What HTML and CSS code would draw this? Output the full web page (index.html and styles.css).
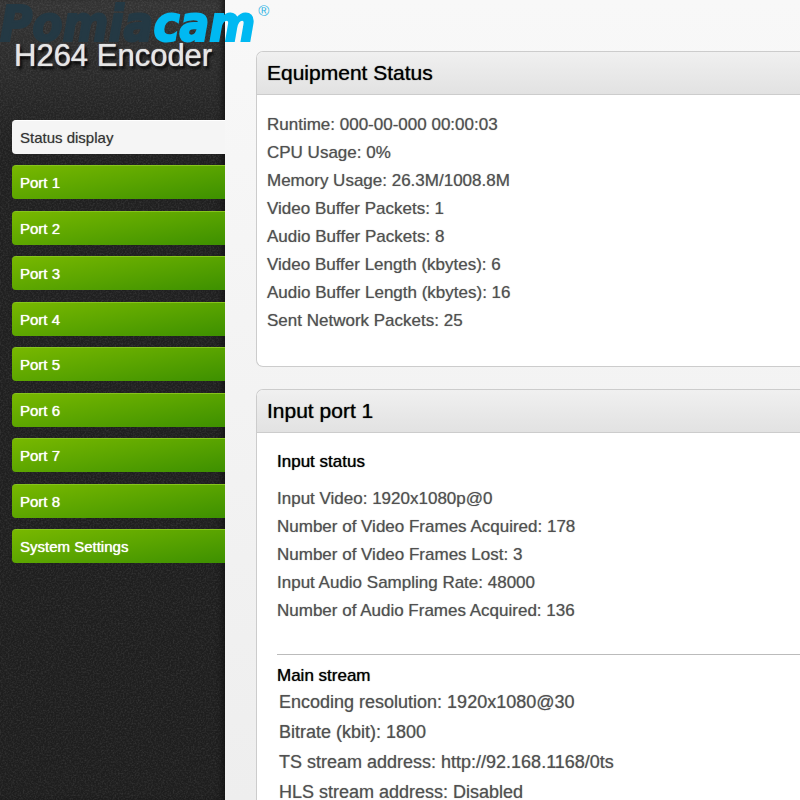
FILE: index.html
```
<!DOCTYPE html>
<html lang="en">
<head>
    <meta charset="utf-8">
    <title>H264 Encoder</title>
    <link rel="stylesheet" href="styles.css">
</head>
<body>
    <div class="brand"><span class="brand-dark">Pomia</span><span class="brand-light">cam</span><sup class="brand-mark">®</sup></div>

    <aside class="sidebar">
        <h1 class="product">H264 Encoder</h1>
        <nav class="menu">
            <a class="menu-item active" href="#status">Status display</a>
            <a class="menu-item" href="#port1">Port 1</a>
            <a class="menu-item" href="#port2">Port 2</a>
            <a class="menu-item" href="#port3">Port 3</a>
            <a class="menu-item" href="#port4">Port 4</a>
            <a class="menu-item" href="#port5">Port 5</a>
            <a class="menu-item" href="#port6">Port 6</a>
            <a class="menu-item" href="#port7">Port 7</a>
            <a class="menu-item" href="#port8">Port 8</a>
            <a class="menu-item" href="#system">System Settings</a>
        </nav>
    </aside>

    <main class="content">
        <section class="panel" id="status">
            <h2 class="panel-title">Equipment Status</h2>
            <div class="panel-body">
                <p>Runtime: 000-00-000 00:00:03</p>
                <p>CPU Usage: 0%</p>
                <p>Memory Usage: 26.3M/1008.8M</p>
                <p>Video Buffer Packets: 1</p>
                <p>Audio Buffer Packets: 8</p>
                <p>Video Buffer Length (kbytes): 6</p>
                <p>Audio Buffer Length (kbytes): 16</p>
                <p>Sent Network Packets: 25</p>
            </div>
        </section>

        <section class="panel" id="port1">
            <h2 class="panel-title">Input port 1</h2>
            <div class="panel-group">
                <h3>Input status</h3>
                <p>Input Video: 1920x1080p@0</p>
                <p>Number of Video Frames Acquired: 178</p>
                <p>Number of Video Frames Lost: 3</p>
                <p>Input Audio Sampling Rate: 48000</p>
                <p>Number of Audio Frames Acquired: 136</p>
            </div>
            <div class="panel-group stream">
                <h3>Main stream</h3>
                <p>Encoding resolution: 1920x1080@30</p>
                <p>Bitrate (kbit): 1800</p>
                <p>TS stream address: http://92.168.1168/0ts</p>
                <p>HLS stream address: Disabled</p>
            </div>
        </section>
    </main>
</body>
</html>
```

FILE: styles.css
```
* {
    box-sizing: border-box;
}

body {
    display: flex;
    min-height: 100vh;
    margin: 0;
    overflow-x: hidden;
    font-family: "Liberation Sans", Arial, sans-serif;
    font-size: 17px;
    color: #505050;
    background: #f4f4f4;
}

h1, h2, h3, p {
    margin: 0;
}

/* logo lies over both the sidebar and the content */
.brand {
    position: absolute;
    top: 0;
    left: 0;
    display: flex;
    font-family: "DejaVu Sans Condensed", "DejaVu Sans", sans-serif;
    font-size: 49px;
    font-weight: bold;
    font-style: italic;
    line-height: 49px;
    -webkit-text-stroke: 2px;
}

.brand-dark {
    color: #243944;
}

.brand-light {
    color: #00b9f2;
}

.brand-mark {
    margin: 3px 0 0 3px;
    font-family: "Liberation Sans", sans-serif;
    font-size: 15px;
    font-weight: normal;
    font-style: normal;
    line-height: 16px;
    color: #2fb4e4;
    -webkit-text-stroke: 0;
}

.sidebar {
    flex: 0 0 225px;
    padding: 39px 0 0 12px;
    background-color: #222;
    background-image:
        url("data:image/svg+xml,%3Csvg xmlns='http://www.w3.org/2000/svg' width='150' height='150'%3E%3Cfilter id='n'%3E%3CfeTurbulence type='fractalNoise' baseFrequency='.6' numOctaves='2' stitchTiles='stitch'/%3E%3CfeColorMatrix values='0 0 0 0 1 0 0 0 0 1 0 0 0 0 1 .2 0 0 0 -.08'/%3E%3C/filter%3E%3Crect width='150' height='150' filter='url(%23n)'/%3E%3C/svg%3E"),
        linear-gradient(#343434, #202020 150px, #1e1e1e);
    box-shadow: inset -6px 0 6px -4px #111;
}

.product {
    padding-left: 2px;
    font-size: 31px;
    font-weight: normal;
    line-height: 34px;
    color: #e6e6e6;
    white-space: nowrap;
    text-shadow: 0 0 1px #e6e6e6, 2px 3px 3px #000;
}

.menu {
    display: flex;
    flex-direction: column;
    justify-content: space-between;
    height: 443px;
    margin-top: 47px;
}

.menu-item {
    height: 34px;
    padding-left: 8px;
    border-top: 1px solid #86c41c;
    border-radius: 4px 0 0 4px;
    background: linear-gradient(170deg, #78b800, #5ba500 50%, #3d9000);
    font-size: 15px;
    line-height: 33px;
    color: #fff;
    text-decoration: none;
    text-shadow: 0 0 1px #fff;
}

.menu-item.active {
    border-top-color: #fff;
    background: #f5f5f5;
    color: #333;
    text-shadow: 0 0 1px #999;
}

.content {
    flex: 1;
    min-width: 0;
    height: 100vh;
    overflow: hidden;
    padding: 51px 0 0 31px;
    background: linear-gradient(#f8f8f8, #eee);
}

.panel {
    margin-bottom: 22px;
    border: 1px solid #ccc;
    border-right: 0;
    border-radius: 7px 0 0 7px;
    background: #fff;
    white-space: nowrap;
}

.panel-title {
    padding: 0 10px;
    border-bottom: 1px solid #ccc;
    border-radius: 6px 0 0 0;
    background: linear-gradient(#f0f0f0, #e2e2e2);
    font-size: 21px;
    font-weight: normal;
    line-height: 42px;
    color: #000;
    text-shadow: 0 0 1px #333;
}

.panel-body {
    padding: 16px 10px 31px;
    line-height: 28px;
}

.panel-group {
    margin-left: 20px;
    line-height: 28px;
}

.panel-group h3 {
    padding: 15px 0 9px;
    font-size: 17px;
    font-weight: normal;
    line-height: 28px;
    color: #000;
    text-shadow: 0 0 1px #333;
}

.stream {
    margin-top: 29px;
    border-top: 1px solid #bbb;
    font-size: 18px;
    line-height: 30px;
}

.stream h3 {
    padding: 10px 0 0;
    line-height: 22px;
}

.stream p {
    padding-left: 2px;
}

.panel p {
    text-shadow: 0 0 1px #999;
}
```
